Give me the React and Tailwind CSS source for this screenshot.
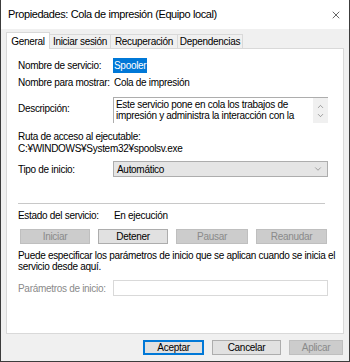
import { X, ChevronUp, ChevronDown } from 'lucide-react'

const font = { fontFamily: '"Liberation Sans", Arial, sans-serif' }

function Row({ label, children, className = '' }) {
  return (
    <div className={`flex items-center ${className}`}>
      <div className="w-[95px] shrink-0">{label}</div>
      {children}
    </div>
  )
}

function Btn({ children, disabled, primary, className = '' }) {
  let cls = 'border-[#adadad] bg-[#e1e1e1] text-black'
  if (disabled) cls = 'border-[#bfbfbf] bg-[#cccccc] text-[#8a8a8a]'
  if (primary) cls = 'border-[#0078d7] bg-[#e1e1e1] text-black ring-1 ring-inset ring-[#0078d7]'
  return (
    <div className={`flex h-[15px] items-center justify-center border ${cls} ${className}`}>
      {children}
    </div>
  )
}

export default function App() {
  return (
    <div
      className="flex h-[362px] w-[350px] flex-col border-x border-b border-[#3c3c3c] bg-[#f0f0f0] text-[10px] tracking-[-0.3px] text-black"
      style={font}
    >
      <div className="flex h-[29px] shrink-0 items-center justify-between bg-white pl-[7px] pr-[7px]">
        <span className="text-[11px] tracking-[-0.4px]">Propiedades: Cola de impresión (Equipo local)</span>
        <X size={12} strokeWidth={1.2} />
      </div>

      <div className="flex flex-1 flex-col px-[5px] pt-[3px]">
        <div className="flex h-[16px] items-end">
          <div className="relative z-10 -mb-px flex h-[17px] w-[44px] items-center justify-center border-x border-t border-[#d9d9d9] bg-white">
            General
          </div>
          <div className="flex h-[14px] w-[61px] items-center justify-center border-t border-r border-[#d9d9d9]">
            Iniciar sesión
          </div>
          <div className="flex h-[14px] w-[67px] items-center justify-center border-t border-r border-[#d9d9d9]">
            Recuperación
          </div>
          <div className="flex h-[14px] w-[65px] items-center justify-center border-t border-r border-[#d9d9d9]">
            Dependencias
          </div>
        </div>

        <div className="flex h-[286px] flex-col border border-[#d9d9d9] bg-white pl-[11px] pr-[15px] pt-[9px]">
          <Row label="Nombre de servicio:" className="h-[14px]">
            <span className="bg-[#0078d7] px-[1px] text-white">Spooler</span>
          </Row>
          <Row label="Nombre para mostrar:" className="mt-[3px] h-[14px]">
            <span className="pl-[1px]">Cola de impresión</span>
          </Row>
          <div className="mt-[8px] flex">
            <div className="w-[95px] shrink-0 pt-[4px]">Descripción:</div>
            <div className="flex h-[26px] flex-1 border-l border-t border-[#adadad]">
              <div className="flex-1 pl-[2px] pt-[1px] leading-[11px]">
                Este servicio pone en cola los trabajos de impresión y administra la interacción con la
              </div>
              <div className="flex w-[15px] flex-col items-center justify-center bg-[#f0f0f0] text-[#606060]">
                <ChevronUp size={9} strokeWidth={1.5} />
                <ChevronDown size={9} strokeWidth={1.5} />
              </div>
            </div>
          </div>
          <div className="mt-[8px] leading-[12px]">Ruta de acceso al ejecutable:</div>
          <div className="leading-[12px]">C:¥WINDOWS¥System32¥spoolsv.exe</div>
          <Row label="Tipo de inicio:" className="mt-[6px]">
            <div className="flex h-[16px] flex-1 items-center justify-between border border-[#adadad] bg-[#e5e5e5] pl-[3px] pr-[4px]">
              <span>Automático</span>
              <ChevronDown size={10} strokeWidth={1.3} className="text-[#606060]" />
            </div>
          </Row>
          <div className="mr-[3px] mt-[26px] h-px bg-[#c8c8c8]" />
          <Row label="Estado del servicio:" className="mt-[4px] h-[14px]">
            <span className="pl-[1px]">En ejecución</span>
          </Row>
          <div className="mt-[7px] flex gap-[8px] pl-[2px]">
            <Btn disabled className="w-[70px]">Iniciar</Btn>
            <Btn className="w-[70px]">Detener</Btn>
            <Btn disabled className="w-[72px]">Pausar</Btn>
            <Btn disabled className="w-[71px]">Reanudar</Btn>
          </div>
          <div className="-mr-[12px] mt-[6px] leading-[11px]">
            Puede especificar los parámetros de inicio que se aplican cuando se inicia el servicio desde aquí.
          </div>
          <Row label="Parámetros de inicio:" className="mt-[8px] text-[#8a8a8a]">
            <div className="h-[16px] flex-1 border border-[#d9d9d9] bg-white" />
          </Row>
        </div>

        <div className="mt-[6px] flex justify-end gap-[8px] pr-[1px]">
          <Btn primary className="w-[61px]">Aceptar</Btn>
          <Btn className="w-[69px]">Cancelar</Btn>
          <Btn disabled className="w-[54px]">Aplicar</Btn>
        </div>
      </div>
    </div>
  )
}
